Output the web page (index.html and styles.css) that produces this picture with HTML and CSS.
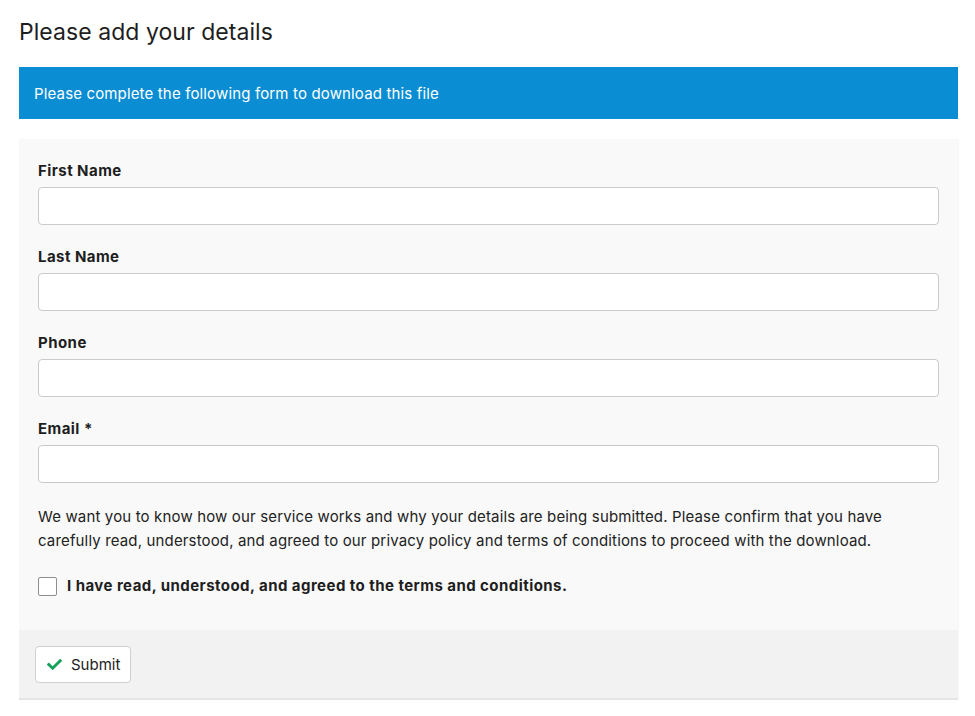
FILE: index.html
```html
<!DOCTYPE html>
<html lang="en">
<head>
<meta charset="utf-8">
<title>Please add your details</title>
<link rel="stylesheet" href="styles.css">
</head>
<body>
<div class="page">
  <h1 class="title">Please add your details</h1>
  <div class="notice">Please complete the following form to download this file</div>
  <form class="panel">
    <div class="panel-body">
      <div class="field">
        <label class="label" for="fn">First Name</label>
        <input class="input" id="fn" type="text">
      </div>
      <div class="field">
        <label class="label" for="ln">Last Name</label>
        <input class="input" id="ln" type="text">
      </div>
      <div class="field">
        <label class="label" for="ph">Phone</label>
        <input class="input" id="ph" type="text">
      </div>
      <div class="field">
        <label class="label" for="em">Email *</label>
        <input class="input" id="em" type="text">
      </div>
      <p class="info">We want you to know how our service works and why your details are being submitted. Please confirm that you have carefully read, understood, and agreed to our privacy policy and terms of conditions to proceed with the download.</p>
      <label class="agree"><span class="box"></span><span>I have read, understood, and agreed to the terms and conditions.</span></label>
    </div>
    <div class="panel-footer">
      <button type="button" class="btn">
        <svg class="check" viewBox="0 0 512 512" width="15" height="15"><path d="M173.898 439.404l-166.4-166.4c-9.997-9.997-9.997-26.206 0-36.204l36.203-36.204c9.997-9.998 26.207-9.998 36.204 0L192 312.69 432.095 72.596c9.997-9.997 26.207-9.997 36.204 0l36.203 36.204c9.997 9.997 9.997 26.206 0 36.204l-294.4 294.401c-9.998 9.997-26.207 9.997-36.204-.001z" fill="#16a05a"/></svg>
        <span>Submit</span>
      </button>
    </div>
  </form>
</div>
</body>
</html>
```
FILE: styles.css
```css
* { box-sizing: border-box; }
html, body { margin: 0; padding: 0; background: #fff; }
body {
  font-family: Inter, "Noto Sans", "Liberation Sans", sans-serif;
  color: #222;
  font-size: 15px;
  letter-spacing: 0.15px;
}
.page { padding: 0 17px 0 19px; }
.title {
  margin: 0;
  padding-top: 16px;
  font-size: 23px;
  font-weight: 400;
  line-height: 32px;
  color: #1e1e1e;
  letter-spacing: 0.05px;
}
.notice {
  margin-top: 19px;
  height: 52px;
  background: #0a8dd3;
  color: #fff;
  padding: 0 15px;
  display: flex;
  align-items: center;
  font-size: 15px;
}
.panel {
  margin-top: 20px;
  background: #f9f9f9;
  box-shadow: 1px 0 1px rgba(0,0,0,0.03);
}
.panel-body { padding: 21px 19px 33px 19px; }
.field { margin-bottom: 21px; }
.label {
  display: block;
  font-weight: 700;
  font-size: 15px;
  line-height: 22px;
  margin-bottom: 5px;
  color: #1e1e1e;
  letter-spacing: 0.45px;
}
.input {
  display: block;
  width: 100%;
  height: 38px;
  border: 1px solid #cacaca;
  border-radius: 4px;
  background: #fff;
  font: inherit;
  padding: 0 10px;
}
.info {
  margin: 22px 0 0 0;
  line-height: 24px;
  font-size: 15px;
  color: #222;
}
.agree {
  display: flex;
  align-items: center;
  gap: 10px;
  margin-top: 22px;
  font-weight: 700;
  line-height: 22px;
  color: #1e1e1e;
  letter-spacing: 0.45px;
}
.box {
  width: 19px;
  height: 19px;
  border: 1px solid #8e8e8e;
  border-radius: 2px;
  background: #fff;
  flex: none;
}
.panel-footer {
  background: #f2f2f2;
  border-bottom: 2px solid #e5e5e5;
  padding: 16px 16px 15px 16px;
}
.btn {
  display: flex;
  align-items: center;
  gap: 9px;
  height: 37px;
  padding: 0 10px 0 11px;
  background: #fff;
  border: 1px solid #cfcfcf;
  border-radius: 4px;
  font: inherit;
  font-size: 15px;
  color: #222;
}
.check { display: block; }
```
